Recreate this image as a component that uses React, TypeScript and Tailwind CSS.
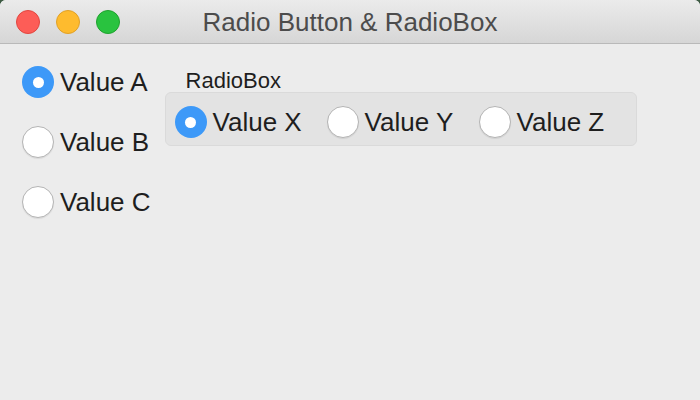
import React from "react";

const font = { fontFamily: '"Liberation Sans", Arial, sans-serif' };

function Radio({ checked, label }: { checked?: boolean; label: string }) {
  return (
    <div className="flex items-center gap-[6px]">
      {checked ? (
        <span className="flex h-[32px] w-[32px] shrink-0 items-center justify-center rounded-full bg-[#3d99f8]">
          <span className="h-[11px] w-[11px] rounded-full bg-white" />
        </span>
      ) : (
        <span className="h-[32px] w-[32px] shrink-0 rounded-full border border-[#b4b4b4] bg-white shadow-[0_1px_1px_rgba(0,0,0,0.08)]" />
      )}
      <span className="text-[26px] leading-none text-[#1e1e1e]">{label}</span>
    </div>
  );
}

export default function App() {
  return (
    <div className="h-[400px] w-[700px] bg-[#3d5a43]" style={font}>
      <div className="flex h-full flex-col overflow-hidden rounded-t-[6px] bg-[#ececec]">
        <div className="relative flex h-[44px] shrink-0 items-center justify-center border-b border-[#b9b9b9] bg-[linear-gradient(180deg,#ebebeb,#d6d6d6)]">
          <div className="absolute left-[16px] top-[10px] flex gap-[16px]">
            <span className="h-[24px] w-[24px] rounded-full border border-[#e2463f] bg-[#fd5d57]" />
            <span className="h-[24px] w-[24px] rounded-full border border-[#e1a126] bg-[#febb2e]" />
            <span className="h-[24px] w-[24px] rounded-full border border-[#1fa22e] bg-[#29c33f]" />
          </div>
          <span className="text-[26px] leading-none text-[#4c4c4c]">Radio Button &amp; RadioBox</span>
        </div>

        <div className="flex gap-[14px] pl-[22px] pt-[22px]">
          <div className="flex flex-col gap-[28px]">
            <Radio checked label="Value A" />
            <Radio label="Value B" />
            <Radio label="Value C" />
          </div>

          <div className="flex flex-col">
            <span className="pl-[21px] pt-[4px] text-[22px] leading-none text-[#1e1e1e]">RadioBox</span>
            <div className="flex h-[54px] w-[472px] items-center rounded-[6px] border border-[#dadada] bg-[#e3e3e3] pl-[9px] pt-[6px]">
              <div className="w-[152px]">
                <Radio checked label="Value X" />
              </div>
              <div className="w-[152px]">
                <Radio label="Value Y" />
              </div>
              <div className="w-[152px]">
                <Radio label="Value Z" />
              </div>
            </div>
          </div>
        </div>
      </div>
    </div>
  );
}
